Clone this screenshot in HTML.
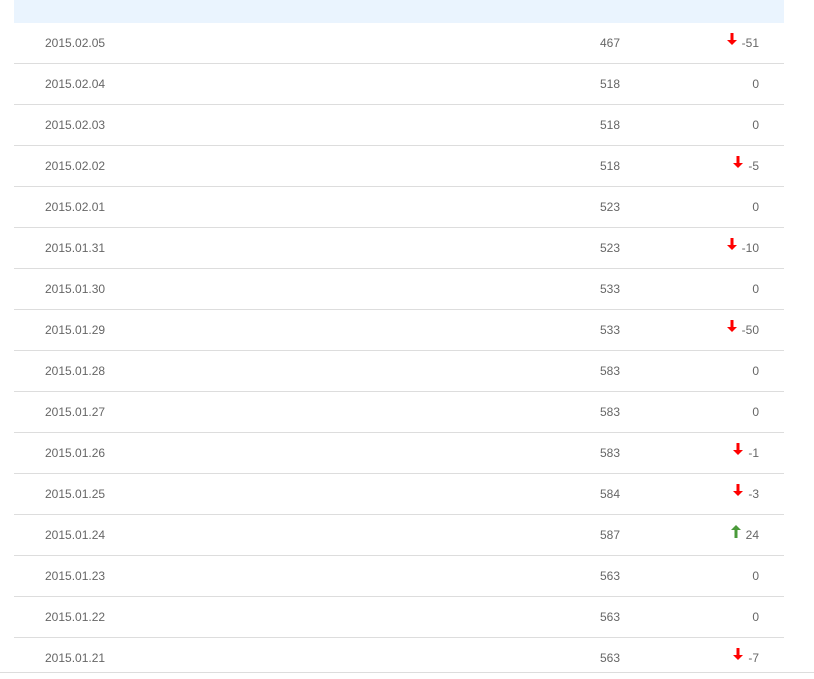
<!DOCTYPE html>
<html><head><style>
body{margin:0;width:814px;height:673px;overflow:hidden;background:#fff;font-family:"Liberation Sans",Arial,sans-serif;font-size:12px;color:#666;position:relative}
.hd{position:absolute;left:14px;top:0;width:770px;height:23px;background:#eaf4fe}
.r{position:absolute;left:14px;width:770px;height:41px;border-bottom:1px solid #ddd;box-sizing:border-box}
.d{position:absolute;left:31px;top:13px}
.n{position:absolute;right:164px;top:13px}
.c{position:absolute;right:25px;top:13px}
.a{position:absolute;top:-3px;left:-15px}
.bl{position:absolute;left:0;top:672px;width:814px;height:1px;background:#ddd}
</style></head><body>
<div class="hd"></div>
<div id="t"></div>
<div class="bl"></div>
<script>
var rows=[["2015.02.05",467,-51],["2015.02.04",518,0],["2015.02.03",518,0],["2015.02.02",518,-5],["2015.02.01",523,0],["2015.01.31",523,-10],["2015.01.30",533,0],["2015.01.29",533,-50],["2015.01.28",583,0],["2015.01.27",583,0],["2015.01.26",583,-1],["2015.01.25",584,-3],["2015.01.24",587,24],["2015.01.23",563,0],["2015.01.22",563,0],["2015.01.21",563,-7]];
var down='<svg class="a" width="10" height="13" viewBox="0 0 10 13"><rect x="3.5" y="0" width="3" height="8" fill="#f00"/><path d="M0 7H10L5 12Z" fill="#f00"/></svg>';
var up='<svg class="a" width="10" height="13" viewBox="0 0 10 13"><rect x="3.5" y="4" width="3" height="9" fill="#4a9a3a"/><path d="M0 5H10L5 0Z" fill="#4a9a3a"/></svg>';
var h='';
rows.forEach(function(r,i){
var top=23+i*41;var last=i==rows.length-1;
var ch=r[2]==0?'0':(r[2]<0?down+r[2]:up+r[2]);
h+='<div class="r" style="top:'+top+'px;'+(last?'border-bottom:none;':'')+'"><span class="d">'+r[0]+'</span><span class="n">'+r[1]+'</span><span class="c">'+ch+'</span></div>';
});
document.getElementById('t').innerHTML=h;
</script>
</body></html>
